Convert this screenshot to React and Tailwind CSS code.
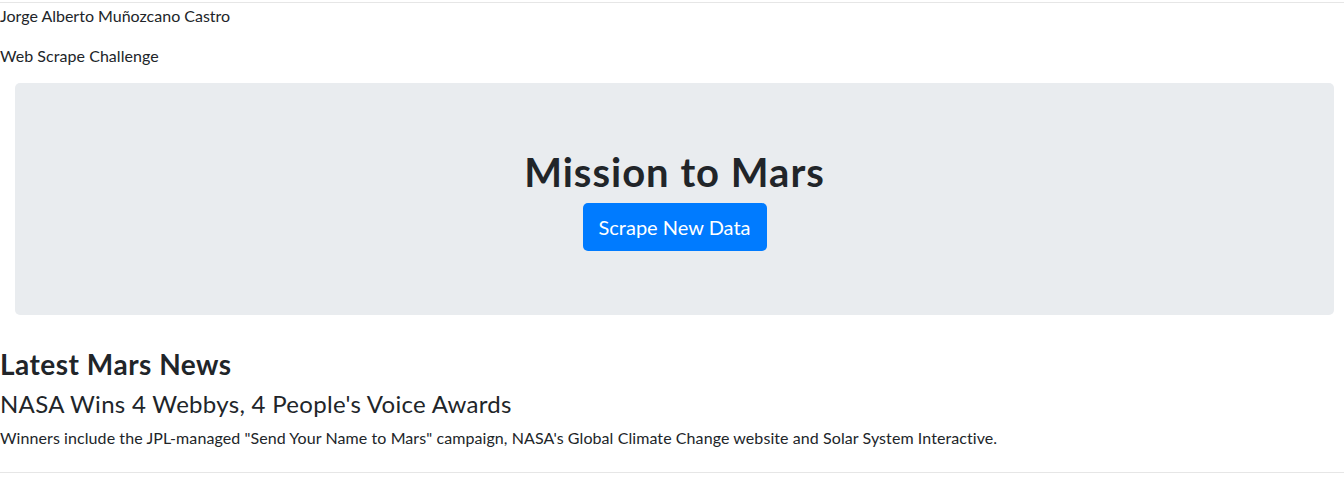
export default function App() {
  return (
    <div className="font-['Lato',sans-serif] text-[#212529] text-[16px] leading-6">
      <div className="h-[2px]" />
      <hr className="border-0 border-t border-[#e6e6e6]" />
      <div className="pt-px">
        <p className="mb-4">Jorge Alberto Muñozcano Castro</p>
        <p className="mb-[15px] tracking-[0.05px]">Web Scrape Challenge</p>
      </div>
      <div className="ml-[15px] mr-[10px] mb-8 rounded-[5px] bg-[#e9ecef] px-8 py-16 flex flex-col items-center">
        <h1 className="text-[40px] font-bold leading-[48px] mb-2 tracking-[1px] pt-px">Mission to Mars</h1>
        <button className="h-12 -mt-px px-4 rounded-[5px] bg-[#007bff] text-white text-[20px] leading-[30px]">
          Scrape New Data
        </button>
      </div>
      <h2 className="text-[28px] font-bold leading-[34px] mb-2 tracking-[0.5px]">Latest Mars News</h2>
      <h4 className="text-[24px] leading-[29px] mb-2 tracking-[0.3px]">NASA Wins 4 Webbys, 4 People's Voice Awards</h4>
      <p className="tracking-[0.08px]">
        Winners include the JPL-managed "Send Your Name to Mars" campaign, NASA's Global Climate Change website and Solar System Interactive.
      </p>
      <hr className="mt-[22px] border-0 border-t border-[#e6e6e6]" />
    </div>
  );
}
